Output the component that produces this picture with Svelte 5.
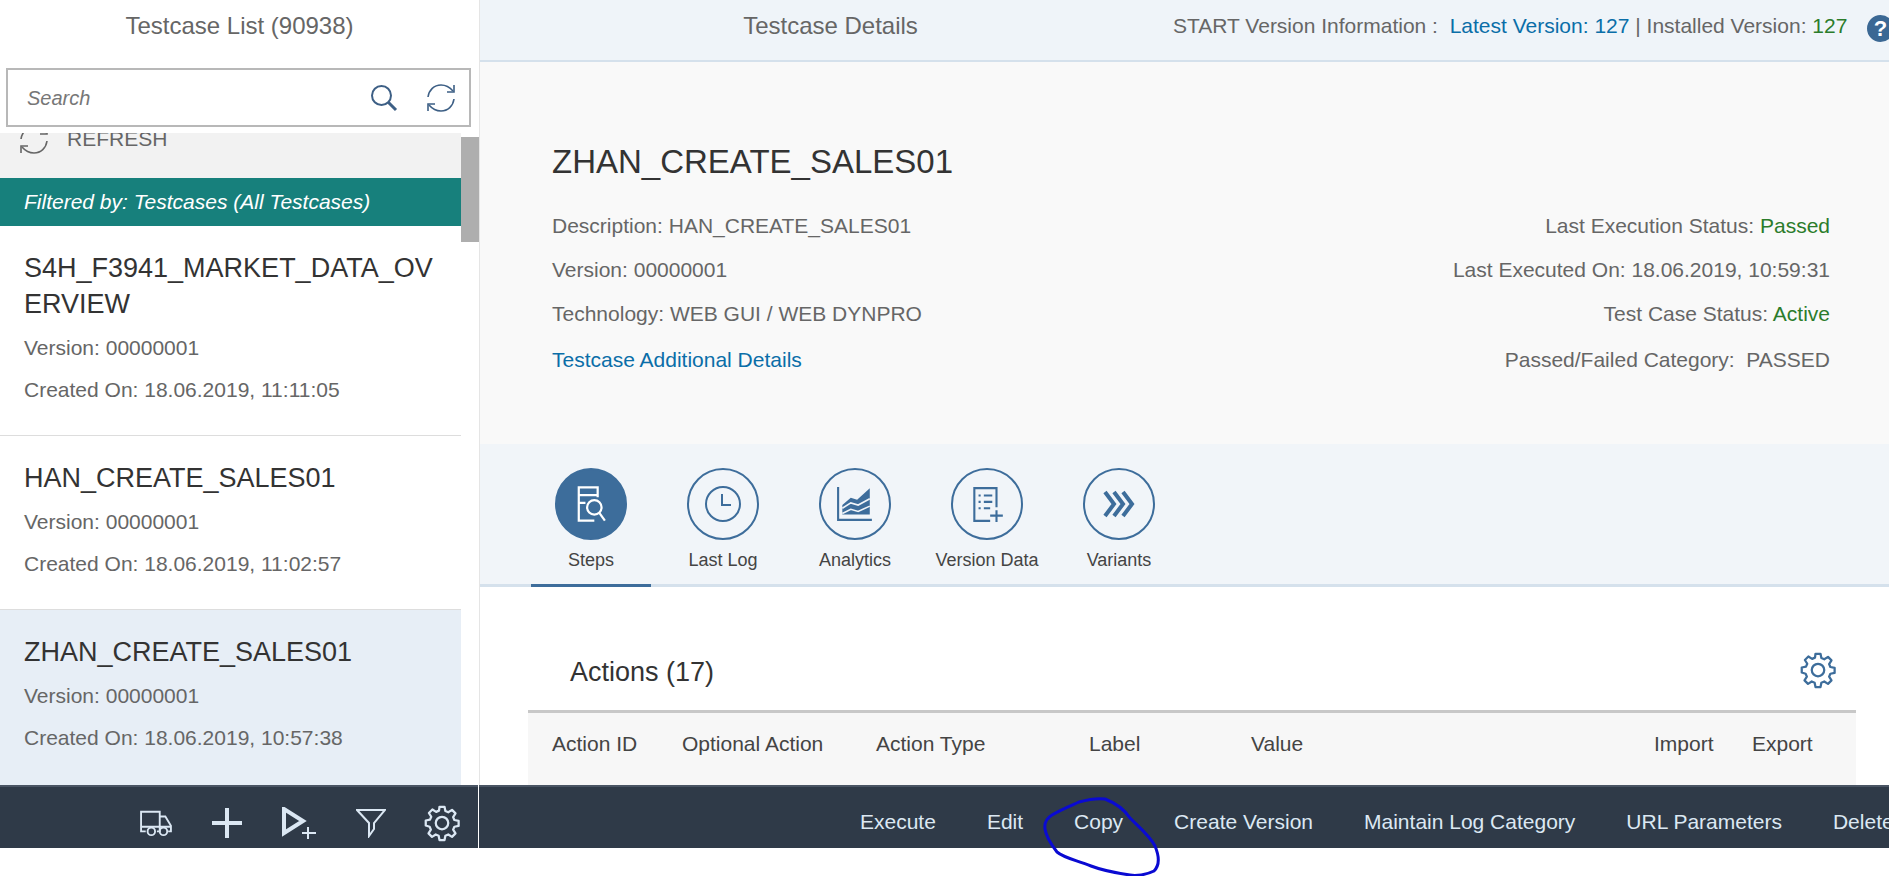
<script lang="ts">
  const testcases = [
    { name: 'S4H_F3941_MARKET_DATA_OVERVIEW', created: '18.06.2019, 11:11:05', selected: false },
    { name: 'HAN_CREATE_SALES01', created: '18.06.2019, 11:02:57', selected: false },
    { name: 'ZHAN_CREATE_SALES01', created: '18.06.2019, 10:57:38', selected: true }
  ];
  const tabs = ['Steps', 'Last Log', 'Analytics', 'Version Data', 'Variants'];
  const columns = ['Action ID', 'Optional Action', 'Action Type', 'Label', 'Value', 'Import', 'Export'];
  const actions = ['Execute', 'Edit', 'Copy', 'Create Version', 'Maintain Log Category', 'URL Parameters', 'Delete'];
  const gear =
    'M14 3h4l.7 3.4 2.3 1 3-1.9 2.8 2.8-1.9 3 1 2.3 3.4.7v4l-3.4.7-1 2.3 1.9 3-2.8 2.8-3-1.9-2.3 1-.7 3.4h-4l-.7-3.4-2.3-1-3 1.9-2.8-2.8 1.9-3-1-2.3L3 18v-4l3.4-.7 1-2.3-1.9-3 2.8-2.8 3 1.9 2.3-1z';
</script>

<div class="page">
  <main class="main">
    <aside class="left">
      <h2 class="left-title">Testcase List (90938)</h2>
      <div class="search">
        <span class="placeholder">Search</span>
        <svg class="search-icon" viewBox="0 0 28 28" width="28" height="28" fill="none" stroke="#3d5f85" stroke-width="2">
          <circle cx="11.5" cy="11.5" r="9.5" />
          <path d="M18.5 18.5 26 26" stroke-width="3" />
        </svg>
        <svg viewBox="0 0 30 30" width="30" height="30" fill="none" stroke="#3d5f85" stroke-width="1.6">
          <path d="M2 14C3 7 8 2 15 2c5 0 9 2.500 12 6" />
          <path d="M28 2v7h-7" />
          <path d="M28 16c-1 7-6 12-13 12-5 0-9-2.500-12-6" />
          <path d="M2 28v-7h7" />
        </svg>
      </div>
      <div class="list">
        <div class="scrollbar"></div>
        <div class="refresh">
          <svg viewBox="0 0 30 30" width="30" height="30" fill="none" stroke="#666" stroke-width="1.6">
            <path d="M2 14C3 7 8 2 15 2c5 0 9 2.500 12 6" />
            <path d="M28 2v7h-7" />
            <path d="M28 16c-1 7-6 12-13 12-5 0-9-2.500-12-6" />
            <path d="M2 28v-7h7" />
          </svg>
          <span>REFRESH</span>
        </div>
        <div class="filter-bar">Filtered by: Testcases (All Testcases)</div>
        {#each testcases as tc}
          <div class="item" class:selected={tc.selected}>
            <div class="item-name">{tc.name}</div>
            <div class="item-meta">Version: 00000001</div>
            <div class="item-meta">Created On: {tc.created}</div>
          </div>
        {/each}
      </div>
    </aside>

    <section class="right">
      <header class="top">
        <h2 class="top-title">Testcase Details</h2>
        <div class="version">
          START Version Information :&nbsp; <span class="blue">Latest Version: 127</span> | Installed Version: <span class="green">127</span>
        </div>
        <span class="help">?</span>
      </header>

      <div class="details">
        <h1>ZHAN_CREATE_SALES01</h1>
        <div class="detail-cols">
          <div class="detail-col">
            <div>Description: HAN_CREATE_SALES01</div>
            <div>Version: 00000001</div>
            <div>Technology: WEB GUI / WEB DYNPRO</div>
            <div class="blue">Testcase Additional Details</div>
          </div>
          <div class="detail-col end">
            <div>Last Execution Status: <span class="green">Passed</span></div>
            <div>Last Executed On: 18.06.2019, 10:59:31</div>
            <div>Test Case Status: <span class="green">Active</span></div>
            <div>Passed/Failed Category:&nbsp; PASSED</div>
          </div>
        </div>
      </div>

      <nav class="tabs">
        {#each tabs as tab, i}
          <div class="tab" class:active={i === 0}>
            <span class="circle">
              {#if i === 0}
                <svg viewBox="0 0 36 36" width="40" height="40" fill="none" stroke="#fff" stroke-width="2">
                  <path d="M24 12V3H7v30h14" />
                  <path d="M7 10h17M7 17h6" />
                  <circle cx="21" cy="21" r="6.500" />
                  <path d="m25.500 26 5 7" />
                </svg>
              {:else if i === 1}
                <svg viewBox="0 0 40 40" width="40" height="40" fill="none" stroke="#3d6d9b" stroke-width="2">
                  <circle cx="20" cy="20" r="17" />
                  <path d="M19 10v11h9" />
                </svg>
              {:else if i === 2}
                <svg viewBox="0 0 36 36" width="38" height="38" fill="none" stroke="#3d6d9b" stroke-width="2">
                  <path d="M2 2v31h32" />
                  <path d="M6 28V19l8-7 6 2 12-11v25z" fill="#3d6d9b" stroke="none" />
                  <path d="m6 22 8-5 7 2 11-6M6 27l8-4 7 2 11-5" stroke="#f1f5f9" stroke-width="1.500" />
                </svg>
              {:else if i === 3}
                <svg viewBox="0 0 36 36" width="38" height="38" fill="none" stroke="#3d6d9b" stroke-width="2">
                  <path d="M27 21V3H6v31h15" />
                  <path d="M10 10h2M15 10h8M10 16h2M15 16h8M10 22h2M15 22h6" />
                  <path d="M27 24v11M21 29h12" />
                </svg>
              {:else}
                <svg viewBox="0 0 40 40" width="40" height="40" fill="none" stroke="#3d6d9b" stroke-width="4">
                  <path d="m6 8 9 12-9 12M15 8l9 12-9 12M24 8l9 12-9 12" />
                </svg>
              {/if}
            </span>
            <span class="tab-label">{tab}</span>
          </div>
        {/each}
      </nav>

      <div class="content">
        <div class="actions-head">
          <h3>Actions (17)</h3>
          <svg viewBox="0 0 32 32" width="40" height="40" fill="none" stroke="#3d6d9b" stroke-width="1.8" stroke-linejoin="round">
            <path d={gear} />
            <circle cx="16" cy="16" r="5" />
          </svg>
        </div>
        <div class="table-head">
          {#each columns as col}
            <span>{col}</span>
          {/each}
        </div>
      </div>
    </section>
  </main>

  <footer class="footer">
    <div class="footer-left">
      <svg viewBox="0 0 36 30" width="34" height="28" fill="none" stroke="#dbe7f3" stroke-width="2">
        <path d="M7 24H2V3h20v21h-3M22 8h6l6 10v6h-3M2 19h32M22 8v11" />
        <circle cx="13" cy="24" r="4" />
        <circle cx="26" cy="24" r="4" />
      </svg>
      <svg viewBox="0 0 30 30" width="30" height="30" fill="none" stroke="#dbe7f3" stroke-width="4">
        <path d="M15 0v30M0 15h30" />
      </svg>
      <svg viewBox="0 0 36 32" width="36" height="32" fill="none" stroke="#dbe7f3">
        <path d="M3 2v24l19-12z" stroke-width="4" />
        <path d="M27 20v12M21 26h14" stroke-width="2" />
      </svg>
      <svg viewBox="0 0 30 30" width="30" height="30" fill="none" stroke="#dbe7f3" stroke-width="2">
        <path d="M1 2h28L18 15v6l-5 7V15z" />
      </svg>
      <svg class="footer-gear" viewBox="0 0 32 32" width="40" height="40" fill="none" stroke="#dbe7f3" stroke-width="1.8" stroke-linejoin="round">
        <path d={gear} />
        <circle cx="16" cy="16" r="5" />
      </svg>
    </div>
    <div class="footer-right">
      {#each actions as action}
        <span>{action}</span>
      {/each}
    </div>
  </footer>

  <svg class="scribble" viewBox="0 0 1889 876" width="1889" height="876" fill="none" stroke="#0a0ad2" stroke-width="3">
    <path d="M1079 802C1090 799 1098 798 1105 799C1118 804 1126 812 1130 818C1140 828 1150 836 1155 846C1160 858 1159 866 1154 871C1146 875 1136 876 1130 875C1116 873 1104 871 1091 866C1076 860 1064 858 1057 852C1050 843 1046 836 1045 829C1044 822 1047 818 1052 815C1060 810 1070 806 1079 802Z" />
  </svg>
</div>

<style>
  :global(body) {
    margin: 0;
    background: #fff;
  }

  .page {
    position: relative;
    width: 1889px;
    height: 876px;
    overflow: hidden;
    font-family: 'Liberation Sans', Arial, sans-serif;
    color: #666;
  }

  h1, h2, h3 {
    margin: 0;
    font-weight: 400;
  }

  .main {
    display: flex;
    height: 785px;
  }

  .left {
    width: 479px;
    flex-shrink: 0;
    display: flex;
    flex-direction: column;
    background: #fff;
    overflow: hidden;
  }

  .left-title {
    height: 52px;
    line-height: 52px;
    text-align: center;
    font-size: 24px;
    color: #666;
  }

  .search {
    margin: 16px 8px 6px 6px;
    height: 59px;
    box-sizing: border-box;
    border: 2px solid #b8b8b8;
    display: flex;
    align-items: center;
    padding: 0 13px 0 19px;
    gap: 28px;
  }

  .placeholder {
    flex: 1;
    font-size: 20px;
    font-style: italic;
    color: #777;
    margin-top: 1px;
  }

  .search-icon {
    margin-top: 1px;
  }

  .list {
    position: relative;
    flex: 1;
    overflow: hidden;
  }

  .scrollbar {
    position: absolute;
    top: 4px;
    left: 461px;
    width: 18px;
    height: 105px;
    background: #aeaeae;
  }

  .refresh {
    height: 45px;
    width: 461px;
    background: #f2f2f2;
    display: flex;
    gap: 18px;
    padding-left: 19px;
    box-sizing: border-box;
    overflow: hidden;
    font-size: 21px;
    color: #666;
  }

  .refresh svg {
    margin-top: -8px;
  }

  .refresh span {
    margin-top: -6px;
    line-height: 23px;
  }

  .filter-bar {
    width: 461px;
    height: 48px;
    line-height: 48px;
    box-sizing: border-box;
    padding-left: 24px;
    background: #17807c;
    color: #fff;
    font-size: 21px;
    font-style: italic;
  }

  .item {
    width: 461px;
    box-sizing: border-box;
    padding: 24px 24px 24px;
    border-bottom: 1px solid #ddd;
  }

  .item.selected {
    background: #e7eef6;
    border-bottom: none;
    padding-bottom: 42px;
  }

  .item-name {
    font-size: 27px;
    line-height: 36px;
    color: #333;
    word-break: break-all;
    margin-bottom: 5px;
  }

  .item-meta {
    font-size: 21px;
    line-height: 42px;
    color: #666;
  }

  .right {
    flex: 1;
    min-width: 0;
    display: flex;
    flex-direction: column;
    border-left: 1px solid #e5e5e5;
  }

  .top {
    height: 62px;
    flex-shrink: 0;
    box-sizing: border-box;
    border-bottom: 2px solid #d5e1ec;
    background: #eff4f9;
    display: flex;
    align-items: center;
    padding: 0 0 9px 8px;
    position: relative;
  }

  .top-title {
    width: 685px;
    text-align: center;
    font-size: 24px;
    color: #666;
  }

  .version {
    font-size: 21px;
    white-space: nowrap;
    color: #666;
  }

  .help {
    position: absolute;
    left: 1387px;
    top: 15px;
    width: 27px;
    height: 27px;
    border-radius: 50%;
    background: #3b6894;
    color: #fff;
    font-size: 22px;
    font-weight: 700;
    line-height: 27px;
    text-align: center;
  }

  .blue {
    color: #0a6ea8;
  }

  .green {
    color: #2b7c2b;
  }

  .details {
    height: 382px;
    flex-shrink: 0;
    box-sizing: border-box;
    background: #f9f9f9;
    padding: 82px 59px 0 72px;
  }

  .details h1 {
    font-size: 33px;
    line-height: 36px;
    color: #333;
  }

  .detail-cols {
    display: flex;
    justify-content: space-between;
    margin-top: 34px;
  }

  .detail-col {
    display: flex;
    flex-direction: column;
    gap: 20px;
    font-size: 21px;
    line-height: 24px;
  }

  .detail-col > :last-child {
    margin-top: 2px;
  }

  .detail-col.end {
    align-items: flex-end;
  }

  .tabs {
    height: 143px;
    flex-shrink: 0;
    box-sizing: border-box;
    background: #f1f5f9;
    border-bottom: 3px solid #d5e1ec;
    display: flex;
    padding: 24px 0 0 45px;
  }

  .tab {
    width: 132px;
    height: 116px;
    display: flex;
    flex-direction: column;
    align-items: center;
    box-sizing: border-box;
    color: #444;
  }

  .tab.active {
    border-bottom: 3px solid #3d6d9b;
    box-sizing: content-box;
    width: 120px;
    margin: 0 6px;
  }

  .circle {
    width: 72px;
    height: 72px;
    box-sizing: border-box;
    border: 2px solid #3d6d9b;
    border-radius: 50%;
    display: flex;
    align-items: center;
    justify-content: center;
  }

  .tab.active .circle {
    background: #3d6d9b;
  }

  .tab-label {
    margin-top: 9px;
    font-size: 18px;
    line-height: 22px;
    white-space: nowrap;
  }

  .content {
    flex: 1;
    min-height: 0;
    display: flex;
    flex-direction: column;
    background: #fff;
  }

  .actions-head {
    height: 123px;
    flex-shrink: 0;
    box-sizing: border-box;
    padding: 67px 51px 0 90px;
    display: flex;
    justify-content: space-between;
    align-items: flex-start;
  }

  .actions-head svg {
    margin-top: -4px;
  }

  .actions-head h3 {
    font-size: 27px;
    line-height: 36px;
    color: #333;
  }

  .table-head {
    flex: 1;
    margin: 0 33px 0 48px;
    border-top: 3px solid #c8c8c8;
    background: #f7f7f7;
    display: grid;
    grid-template-columns: 130px 194px 213px 162px 403px 98px auto;
    padding-left: 24px;
    padding-top: 19px;
    font-size: 21px;
    color: #444;
    white-space: nowrap;
  }

  .footer {
    height: 63px;
    box-sizing: border-box;
    border-top: 2px solid #4a5564;
    background: #2f3a48;
    display: flex;
  }

  .footer-left {
    width: 479px;
    flex-shrink: 0;
    box-sizing: border-box;
    display: flex;
    align-items: center;
    justify-content: flex-end;
    gap: 39px;
    padding: 12px 19px 0 0;
    border-right: 1px solid #fff;
    margin-top: -2px;
  }

  .footer-gear {
    margin: 0 -3px;
  }

  .footer-right {
    flex: 1;
    display: flex;
    align-items: center;
    gap: 51px;
    padding: 9px 0 0 381px;
    color: #dce8f3;
    font-size: 21px;
    white-space: nowrap;
    overflow: hidden;
  }

  .scribble {
    position: absolute;
    left: 0;
    top: 0;
    pointer-events: none;
  }
</style>
